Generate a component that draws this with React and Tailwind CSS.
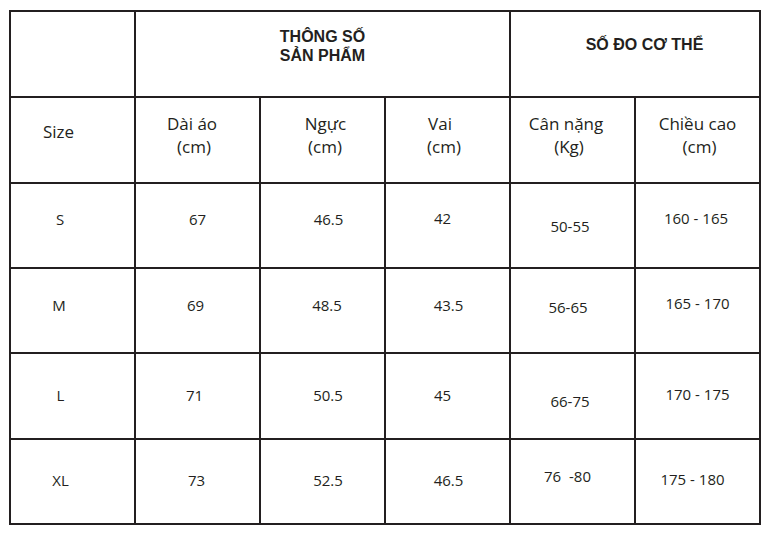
import React from "react";

function Cell({ cls = "", children }) {
  return (
    <div className={"border-r-2 border-b-2 border-[#231f20] flex flex-col " + cls}>
      {children}
    </div>
  );
}

const rows = [
  [
    { t: "S", c: "pt-[25px]", l: "pr-[25px]" },
    { t: "67", c: "pt-[25px]", l: "" },
    { t: "46.5", c: "pt-[25px]", l: "pl-[12px]" },
    { t: "42", c: "pt-[24px]", l: "pr-[10px]" },
    { t: "50-55", c: "pt-[32px]", l: "pr-[5px]" },
    { t: "160 - 165", c: "pt-[24px]", l: "pr-[3px]" },
  ],
  [
    { t: "M", c: "pt-[26px]", l: "pr-[27px]" },
    { t: "69", c: "pt-[26px]", l: "pr-[4px]" },
    { t: "48.5", c: "pt-[26px]", l: "pl-[9px]" },
    { t: "43.5", c: "pt-[26px]", l: "pl-[2px]" },
    { t: "56-65", c: "pt-[28px]", l: "pr-[9px]" },
    { t: "165 - 170", c: "pt-[24px]", l: "" },
  ],
  [
    { t: "L", c: "pt-[31px]", l: "pr-[24px]" },
    { t: "71", c: "pt-[31px]", l: "pr-[6px]" },
    { t: "50.5", c: "pt-[31px]", l: "pl-[11px]" },
    { t: "45", c: "pt-[31px]", l: "pr-[10px]" },
    { t: "66-75", c: "pt-[37px]", l: "pr-[5px]" },
    { t: "170 - 175", c: "pt-[30px]", l: "" },
  ],
  [
    { t: "XL", c: "pt-[30px]", l: "pr-[24px]" },
    { t: "73", c: "pt-[30px]", l: "pr-[2px]" },
    { t: "52.5", c: "pt-[30px]", l: "pl-[11px]" },
    { t: "46.5", c: "pt-[30px]", l: "pl-[2px]" },
    { t: "76  -80", c: "pt-[26px]", l: "pr-[10px]" },
    { t: "175 - 180", c: "pt-[29px]", l: "pr-[10px]" },
  ],
];

const heads = [
  { a: "Dài áo", al: "pr-[11px]", b: "(cm)", bl: "pr-[7px]" },
  { a: "Ngực", al: "pl-[6px]", b: "(cm)", bl: "pl-[5px]" },
  { a: "Vai", al: "pr-[15px]", b: "(cm)", bl: "pr-[7px]" },
  { a: "Cân nặng", al: "pr-[13px]", b: "(Kg)", bl: "pr-[7px]" },
  { a: "Chiều cao", al: "", b: "(cm)", bl: "pl-[4px]" },
];

export default function App() {
  return (
    <div className="w-[770px] h-[533px] bg-white pt-[10px] pl-[9px] text-[#231f20] font-['Open_Sans','Noto_Sans',sans-serif]">
      <div className="grid grid-cols-[repeat(6,125px)] grid-rows-[86px_86px_85px_85px_86px_85px] w-[752px] border-l-2 border-t-2 border-[#231f20]">
        <Cell />
        <Cell cls="col-span-3 pt-[15px] items-center">
          <div className="font-['Liberation_Sans',Arial,sans-serif] text-[16px] leading-[19px] font-bold text-center">
            <div>THÔNG SỐ</div>
            <div>SẢN PHẨM</div>
          </div>
        </Cell>
        <Cell cls="col-span-2 pt-[23px]">
          <div className="font-['Liberation_Sans',Arial,sans-serif] text-[16px] leading-[19px] font-bold text-center pl-[19px]">
            SỐ ĐO CƠ THỂ
          </div>
        </Cell>

        <Cell cls="pt-[22px]">
          <div className="text-[17px] leading-[23px] text-center pr-[28px]">Size</div>
        </Cell>
        {heads.map((h, i) => (
          <Cell key={i} cls="pt-[14px]">
            <div className={"text-[17px] leading-[23px] text-center " + h.al}>{h.a}</div>
            <div className={"text-[17px] leading-[23px] text-center " + h.bl}>{h.b}</div>
          </Cell>
        ))}

        {rows.map((r, ri) =>
          r.map((c, ci) => (
            <Cell key={ri + "-" + ci} cls={c.c}>
              <div className={"text-[15px] leading-[20px] text-center whitespace-pre " + c.l}>
                {c.t}
              </div>
            </Cell>
          ))
        )}
      </div>
    </div>
  );
}
